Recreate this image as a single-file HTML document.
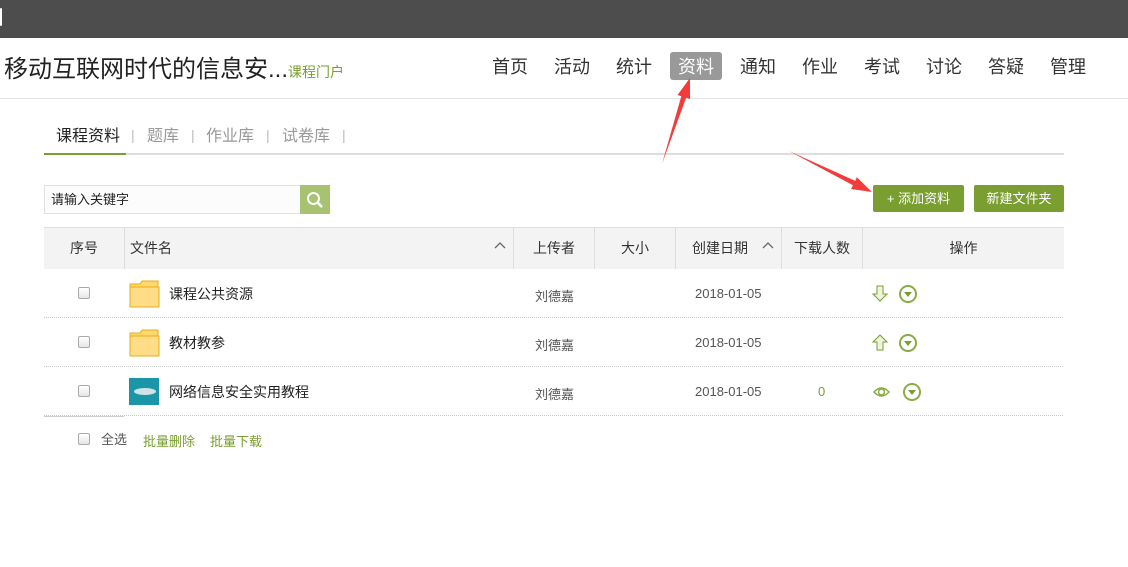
<!DOCTYPE html>
<html><head><meta charset="utf-8">
<style>
*{margin:0;padding:0;box-sizing:border-box}
body{width:1128px;height:567px;overflow:hidden;background:#fff;font-family:"Liberation Sans","Noto Sans CJK SC",sans-serif;color:#333;position:relative}
.a{position:absolute;white-space:nowrap}
.nav{font-size:18px;color:#333;top:53px}
.th{position:absolute;top:228px;height:41px;line-height:41px;font-size:14px;color:#333;text-align:center;border-right:1px solid #ddd}
.row{position:absolute;left:44px;width:1019px;height:49px;border-bottom:1px dotted #c8c8c8}
.cb{position:absolute;width:12px;height:12px;border:1px solid #aaa;border-radius:2px;background:linear-gradient(#fff,#e6e6e6)}
.sm{font-size:13px;color:#555}
.tb{position:absolute;top:122px;font-size:16px;color:#999}
.sep{position:absolute;top:127px;font-size:14px;color:#bbb}
.chev{position:absolute;top:241px}
</style></head><body>
<div class="a" style="left:0;top:0;width:1128px;height:38px;background:#4d4d4d"></div>
<div class="a" style="left:0;top:8px;width:2px;height:18px;background:#fff;border-radius:1px"></div>
<div class="a" style="left:4px;top:49px;font-size:24px;color:#222">移动互联网时代的信息安...<span style="font-size:14px;color:#7a9e2f">课程门户</span></div>
<div class="a" style="left:670px;top:52px;width:52px;height:28px;background:#999;border-radius:3px"></div>
<div class="a nav" style="left:492px">首页</div>
<div class="a nav" style="left:554px">活动</div>
<div class="a nav" style="left:616px">统计</div>
<div class="a nav" style="left:678px;color:#fff">资料</div>
<div class="a nav" style="left:740px">通知</div>
<div class="a nav" style="left:802px">作业</div>
<div class="a nav" style="left:864px">考试</div>
<div class="a nav" style="left:926px">讨论</div>
<div class="a nav" style="left:988px">答疑</div>
<div class="a nav" style="left:1050px">管理</div>
<div class="a" style="left:0;top:98px;width:1128px;height:1px;background:#e3e3e3"></div>

<div class="tb" style="left:56px;color:#222">课程资料</div>
<div class="sep" style="left:131px">|</div>
<div class="tb" style="left:147px">题库</div>
<div class="sep" style="left:191px">|</div>
<div class="tb" style="left:206px">作业库</div>
<div class="sep" style="left:266px">|</div>
<div class="tb" style="left:282px">试卷库</div>
<div class="sep" style="left:342px">|</div>
<div class="a" style="left:44px;top:153px;width:1020px;height:2px;background:#ddd"></div>
<div class="a" style="left:44px;top:153px;width:82px;height:2px;background:#7a9e2f"></div>

<div class="a" style="left:44px;top:185px;width:257px;height:29px;border:1px solid #e0e0e0;background:#fcfcfc;font-size:13px;color:#222;line-height:27px;padding-left:6px">请输入关键字</div>
<div class="a" style="left:300px;top:185px;width:30px;height:29px;background:#a7c270"></div>
<svg class="a" style="left:305px;top:190px" width="20" height="20"><circle cx="8.5" cy="8.5" r="5.5" fill="none" stroke="#fff" stroke-width="2"/><line x1="12.5" y1="12.5" x2="17" y2="17" stroke="#fff" stroke-width="2.5"/></svg>
<div class="a" style="left:873px;top:185px;width:91px;height:27px;background:#7a9e2f;border-radius:2px;color:#fff;font-size:13px;line-height:27px;text-align:center">+ 添加资料</div>
<div class="a" style="left:974px;top:185px;width:90px;height:27px;background:#7a9e2f;border-radius:2px;color:#fff;font-size:13px;line-height:27px;text-align:center">新建文件夹</div>

<div class="a" style="left:44px;top:227px;width:1020px;height:42px;background:#f3f3f3;border-top:1px solid #ddd"></div>
<div class="th" style="left:44px;width:81px">序号</div>
<div class="th" style="left:125px;width:389px;text-align:left;padding-left:5px">文件名</div>
<div class="th" style="left:514px;width:81px">上传者</div>
<div class="th" style="left:595px;width:81px">大小</div>
<div class="th" style="left:676px;width:106px;text-align:left;padding-left:16px">创建日期</div>
<div class="th" style="left:782px;width:81px">下载人数</div>
<div class="th" style="left:863px;width:201px;border-right:none">操作</div>
<svg class="chev" style="left:494px" width="12" height="8"><path d="M1 7L6 2L11 7" fill="none" stroke="#666" stroke-width="1.3"/></svg>
<svg class="chev" style="left:762px" width="12" height="8"><path d="M1 7L6 2L11 7" fill="none" stroke="#666" stroke-width="1.3"/></svg>

<div class="row" style="top:269px"></div>
<div class="row" style="top:318px"></div>
<div class="row" style="top:367px"></div>
<div class="cb" style="left:78px;top:287px"></div>
<div class="cb" style="left:78px;top:336px"></div>
<div class="cb" style="left:78px;top:385px"></div>
<svg class="a" style="left:129px;top:280px" width="31" height="28"><path d="M1 4h10l2-3h16v26H1z" fill="#fcd96a" stroke="#eaaa1c"/><rect x="1" y="7" width="29" height="20" fill="#fedd86" stroke="#eaaa1c"/></svg>
<svg class="a" style="left:129px;top:329px" width="31" height="28"><path d="M1 4h10l2-3h16v26H1z" fill="#fcd96a" stroke="#eaaa1c"/><rect x="1" y="7" width="29" height="20" fill="#fedd86" stroke="#eaaa1c"/></svg>
<div class="a" style="left:129px;top:378px;width:30px;height:27px;background:#1b95a8"></div>
<div class="a" style="left:134px;top:388px;width:22px;height:7px;background:#cfe3e6;border-radius:50%"></div>
<div class="a" style="left:169px;top:284px;font-size:14px;color:#222">课程公共资源</div>
<div class="a" style="left:169px;top:333px;font-size:14px;color:#222">教材教参</div>
<div class="a" style="left:169px;top:382px;font-size:14px;color:#222">网络信息安全实用教程</div>
<div class="a sm" style="left:535px;top:286px">刘德嘉</div>
<div class="a sm" style="left:535px;top:335px">刘德嘉</div>
<div class="a sm" style="left:535px;top:384px">刘德嘉</div>
<div class="a sm" style="left:695px;top:286px">2018-01-05</div>
<div class="a sm" style="left:695px;top:335px">2018-01-05</div>
<div class="a sm" style="left:695px;top:384px">2018-01-05</div>
<div class="a sm" style="left:818px;top:384px;color:#7a9e2f">0</div>
<svg class="a" style="left:872px;top:285px" width="16" height="17"><path d="M5 1h6v8h4l-7 7-7-7h4z" fill="#eef5df" stroke="#7a9e2f"/></svg>
<svg class="a" style="left:872px;top:334px" width="16" height="17"><path d="M5 16h6V8h4L8 1 1 8h4z" fill="#eef5df" stroke="#7a9e2f"/></svg>
<svg class="a" style="left:873px;top:386px" width="17" height="12"><path d="M1 6Q8.5-2 16 6Q8.5 14 1 6z" fill="none" stroke="#8aab45" stroke-width="1.5"/><circle cx="8.5" cy="6" r="3" fill="none" stroke="#8aab45" stroke-width="1.5"/></svg>
<svg class="a" style="left:898px;top:284px" width="20" height="20"><circle cx="10" cy="10" r="8" fill="none" stroke="#8aab45" stroke-width="2"/><path d="M6 8h8l-4 5z" fill="#7a9e2f"/></svg>
<svg class="a" style="left:898px;top:333px" width="20" height="20"><circle cx="10" cy="10" r="8" fill="none" stroke="#8aab45" stroke-width="2"/><path d="M6 8h8l-4 5z" fill="#7a9e2f"/></svg>
<svg class="a" style="left:902px;top:382px" width="20" height="20"><circle cx="10" cy="10" r="8" fill="none" stroke="#8aab45" stroke-width="2"/><path d="M6 8h8l-4 5z" fill="#7a9e2f"/></svg>
<div class="a" style="left:44px;top:416px;width:80px;height:1px;background:#ccc"></div>

<div class="cb" style="left:78px;top:433px"></div>
<div class="a" style="left:101px;top:429px;font-size:13px;color:#555">全选</div>
<div class="a" style="left:143px;top:431px;font-size:13px;color:#7a9e2f">批量删除</div>
<div class="a" style="left:210px;top:431px;font-size:13px;color:#7a9e2f">批量下载</div>

<svg class="a" style="left:0;top:0" width="1128" height="567">
<polygon points="662,164 681.3,96.2 677.5,95 690,78 690,99 686.1,97.8" fill="#f33b3c"/>
<polygon points="789,151 855.2,180.9 856.8,177.2 872,192 851,189 853,185.3" fill="#f33b3c"/>
</svg>
</body></html>
